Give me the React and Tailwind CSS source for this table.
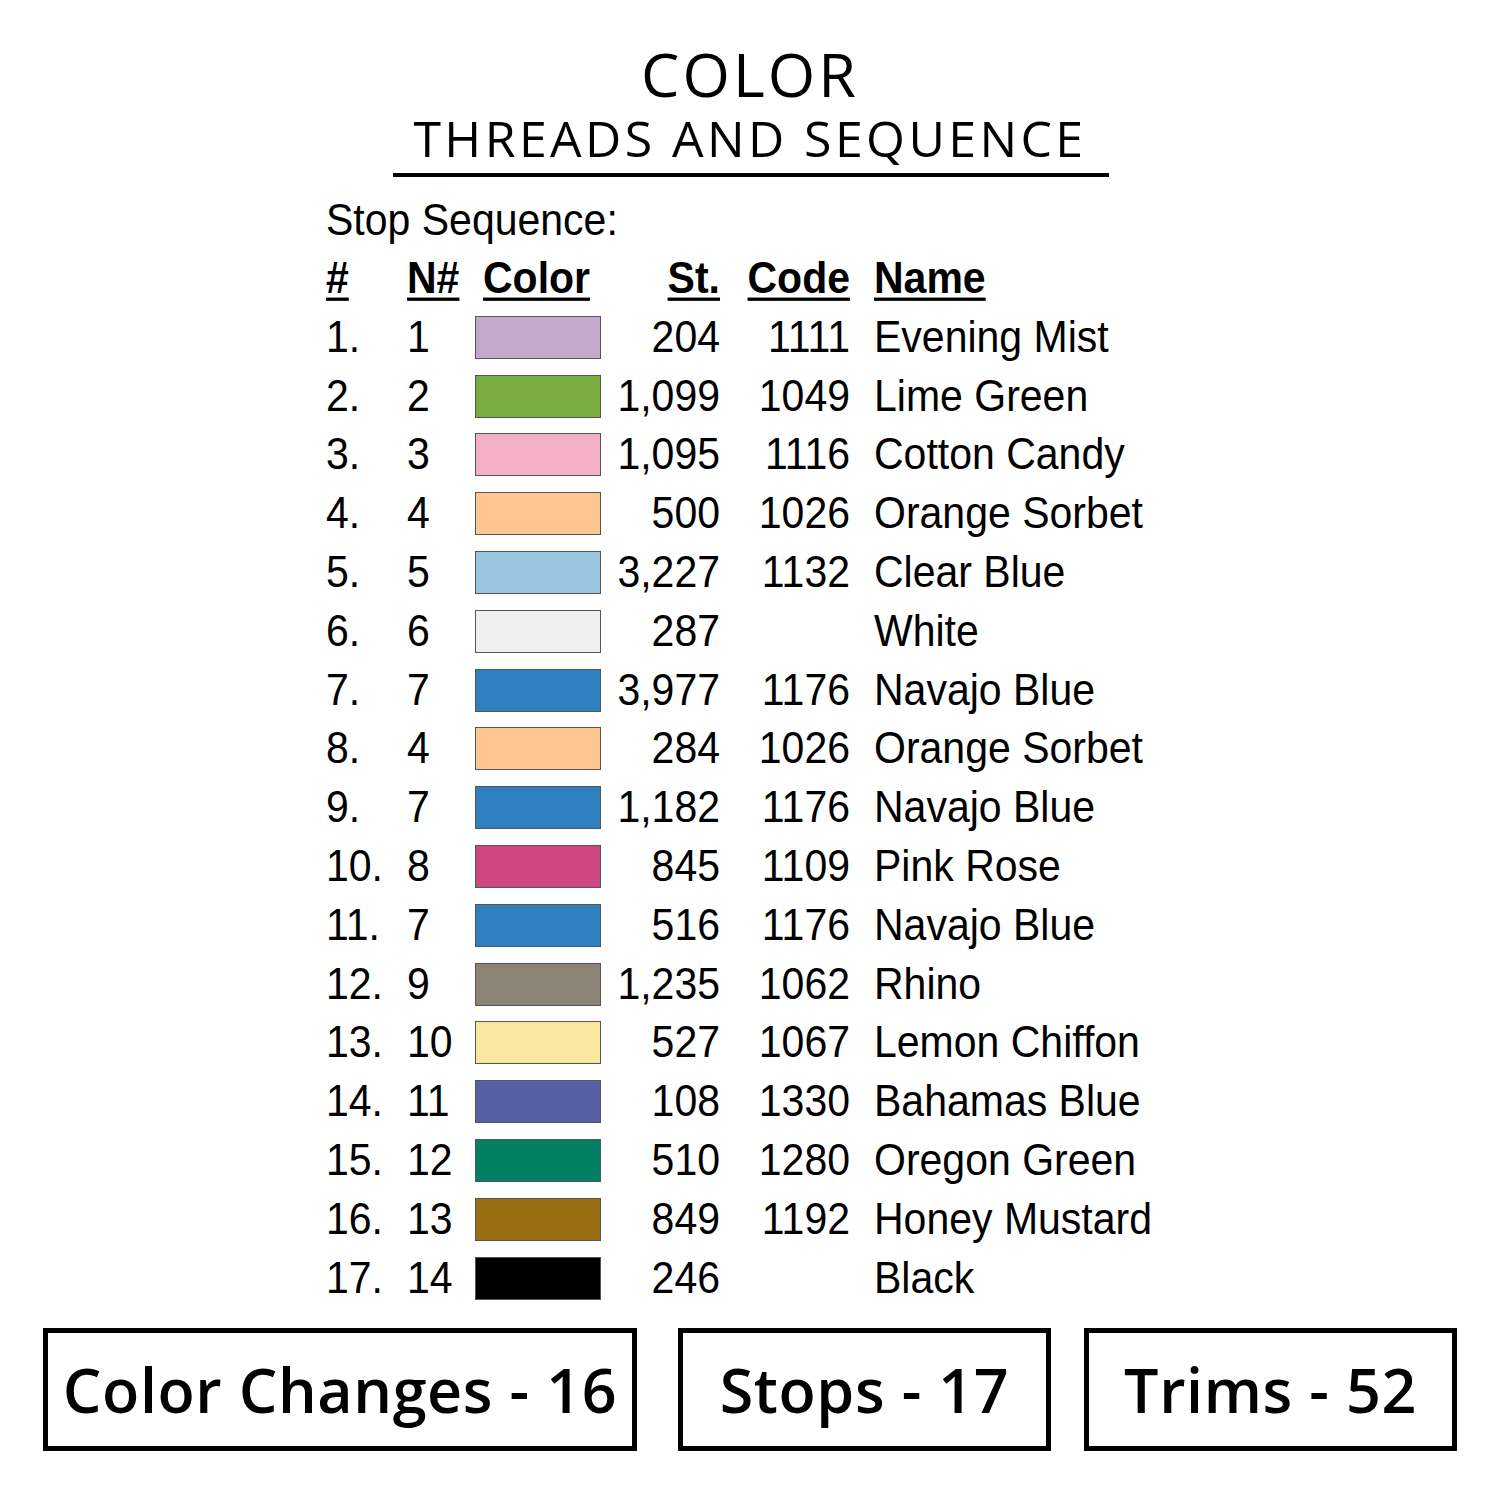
import React from 'react';

const ROWS = [
  ['1.', '1', '#c0a9ca', '204', '1111', 'Evening Mist'],
  ['2.', '2', '#78ac40', '1,099', '1049', 'Lime Green'],
  ['3.', '3', '#f2afc5', '1,095', '1116', 'Cotton Candy'],
  ['4.', '4', '#fec691', '500', '1026', 'Orange Sorbet'],
  ['5.', '5', '#98c6e0', '3,227', '1132', 'Clear Blue'],
  ['6.', '6', '#efefef', '287', '', 'White'],
  ['7.', '7', '#2f80be', '3,977', '1176', 'Navajo Blue'],
  ['8.', '4', '#fec691', '284', '1026', 'Orange Sorbet'],
  ['9.', '7', '#2f80be', '1,182', '1176', 'Navajo Blue'],
  ['10.', '8', '#cd4680', '845', '1109', 'Pink Rose'],
  ['11.', '7', '#2f80be', '516', '1176', 'Navajo Blue'],
  ['12.', '9', '#8a8376', '1,235', '1062', 'Rhino'],
  ['13.', '10', '#f9e7a0', '527', '1067', 'Lemon Chiffon'],
  ['14.', '11', '#5660a5', '108', '1330', 'Bahamas Blue'],
  ['15.', '12', '#007f62', '510', '1280', 'Oregon Green'],
  ['16.', '13', '#9a6e12', '849', '1192', 'Honey Mustard'],
  ['17.', '14', '#000000', '246', '', 'Black'],
];

const GRID = 'grid grid-cols-[81px_68px_126px_119px_130px_1fr] items-center';

// arial-ish text, a little taller than wide like the source print
function T({ children, className = '' }) {
  return <span className={`inline-block scale-y-[1.09] ${className}`}>{children}</span>;
}

function StatBox({ label, className }) {
  return (
    <div className={`flex h-[123px] items-center justify-center border-[5px] border-black ${className}`}>
      <span className="font-['Open_Sans',sans-serif] text-[61px] font-semibold leading-none tracking-[0.6px] text-black">
        {label}
      </span>
    </div>
  );
}

export default function App() {
  return (
    <div className="flex h-[1500px] w-[1500px] flex-col bg-white text-black">
      <div className="flex flex-col items-center pt-[43px]">
        <h1 className="h-[62px] font-['Open_Sans',sans-serif] text-[61px] font-medium leading-none tracking-[3px]">COLOR</h1>
        <h2 className="mt-[8px] h-[52px] font-['Open_Sans',sans-serif] text-[50px] font-normal leading-none tracking-[3.4px]">
          THREADS AND SEQUENCE
        </h2>
        <div className="ml-[2px] mt-[8px] h-[4px] w-[716px] bg-black" />
      </div>

      <div className="ml-[326px] mt-[15px] font-['Liberation_Sans',Arial,sans-serif] text-[41px] leading-none">
        <div className="flex h-[56px] items-center">
          <T>Stop Sequence:</T>
        </div>
        <div className={`${GRID} h-[60px] font-bold`}>
          <T className="underline decoration-[3px] underline-offset-[4px]">#</T>
          <T className="underline decoration-[3px] underline-offset-[4px]">N#</T>
          <div className="pl-2">
            <T className="underline decoration-[3px] underline-offset-[4px]">Color</T>
          </div>
          <div className="text-right">
            <T className="underline decoration-[3px] underline-offset-[4px]">St.</T>
          </div>
          <div className="text-right">
            <T className="underline decoration-[3px] underline-offset-[4px]">Code</T>
          </div>
          <div className="pl-6">
            <T className="underline decoration-[3px] underline-offset-[4px]">Name</T>
          </div>
        </div>
        {ROWS.map(([n, id, color, st, code, name]) => (
          <div key={n} className={`${GRID} h-[58.8px]`}>
            <T>{n}</T>
            <T>{id}</T>
            <div className="h-[43px] w-[126px] border border-[#555]" style={{ backgroundColor: color }} />
            <div className="text-right">
              <T>{st}</T>
            </div>
            <div className="text-right">
              <T>{code}</T>
            </div>
            <div className="pl-6">
              <T>{name}</T>
            </div>
          </div>
        ))}
      </div>

      <div className="mt-[20px] flex items-start px-[43px]">
        <StatBox label="Color Changes - 16" className="w-[594px]" />
        <StatBox label="Stops - 17" className="ml-[41px] w-[373px]" />
        <StatBox label="Trims - 52" className="ml-[33px] w-[373px]" />
      </div>
    </div>
  );
}
